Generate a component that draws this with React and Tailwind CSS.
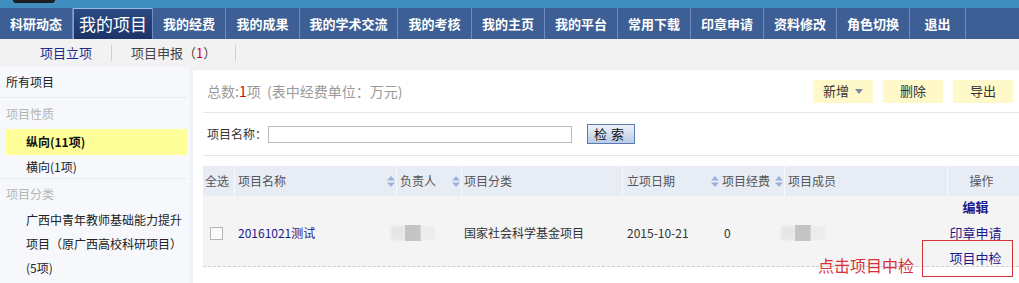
const navItems = [
  { label: "科研动态", w: "w-[73px]" },
  { label: "我的项目", w: "w-[80px]", active: true },
  { label: "我的经费", w: "w-[73px]" },
  { label: "我的成果", w: "w-[74px]" },
  { label: "我的学术交流", w: "w-[98px]" },
  { label: "我的考核", w: "w-[74px]" },
  { label: "我的主页", w: "w-[73px]" },
  { label: "我的平台", w: "w-[73px]" },
  { label: "常用下载", w: "w-[73px]" },
  { label: "印章申请", w: "w-[73px]" },
  { label: "资料修改", w: "w-[73px]" },
  { label: "角色切换", w: "w-[73px]" },
  { label: "退出", w: "w-[56px]" },
];

function SortIcon() {
  return (
    <svg width="8" height="11" viewBox="0 0 8 11" className="shrink-0">
      <path d="M4 0 L8 4.5 L0 4.5 Z" fill="#9bb3dc" />
      <path d="M0 6.5 L8 6.5 L4 11 Z" fill="#9bb3dc" />
    </svg>
  );
}

function Blur({ className }) {
  return (
    <div className={"flex h-[16px] items-center " + className}>
      <div className="h-[14px] w-[14px] bg-[#e6e6e6] blur-[1px]" />
      <div className="h-[16px] w-[16px] bg-[#c4c4c4] blur-[0.5px]" />
      <div className="h-[14px] w-[14px] bg-[#ececec] blur-[1px]" />
    </div>
  );
}

export default function App() {
  return (
    <div
      className="w-[1019px] h-[283px] overflow-hidden bg-white text-[12px] text-[#333]"
      style={{ fontFamily: '"Noto Sans CJK SC", "Noto Sans", sans-serif' }}
    >
      {/* header remnant */}
      <div className="h-[8px] bg-[#3f8ebf] relative">
        <div className="absolute left-[13px] top-0 h-[3px] w-[42px] rounded-b-[3px] bg-[#1e1e1e]" />
      </div>

      {/* main nav */}
      <div className="flex h-[31px] bg-[#3d5f95]">
        {navItems.map((it) => (
          <div
            key={it.label}
            className={
              "flex items-center justify-center border-r border-[#6c8cc2] font-bold text-white " +
              it.w +
              (it.active
                ? " text-[17px] font-normal bg-gradient-to-b from-[#2c4b85] to-[#1c3366] border-l border-t border-l-[#7d9fd3] border-t-[#9bb8e2]"
                : " text-[13px]")
            }
          >
            {it.label}
          </div>
        ))}
      </div>

      {/* sub nav */}
      <div className="flex h-[28px] items-center bg-[#f2f2f2] text-[13px]">
        <span className="ml-[40px] text-[#1d2a8f]">项目立项</span>
        <span className="ml-[19px] h-[16px] w-px bg-[#d0d0d0]" />
        <span className="ml-[19px] text-[#444]">
          项目申报（<span className="text-[#d0021b]">1</span>）
        </span>
        <span className="ml-[19px] h-[16px] w-px bg-[#d0d0d0]" />
      </div>

      <div className="flex h-[216px]">
        {/* sidebar */}
        <div className="w-[193px] shrink-0 border-r-[3px] border-[#eef2f8] bg-[#f6f8fb] pr-[3px]">
          <div className="flex h-[31px] items-center border-b border-[#e8ebf0] pl-[6px] text-[#222]">
            所有项目
          </div>
          <div className="flex h-[31px] items-center pl-[6px] text-[#b5b5b5]">项目性质</div>
          <div className="ml-[6px] flex h-[26px] items-center bg-[#ffff99] pl-[20px] font-bold text-[#111]">
            纵向(11项)
          </div>
          <div className="flex h-[24px] items-center border-b border-[#e8ebf0] pl-[26px] text-[#222]">
            横向(1项)
          </div>
          <div className="flex h-[29px] items-center pl-[6px] text-[#b5b5b5]">项目分类</div>
          <div className="pl-[26px] leading-[24px] text-[#222]">
            <div>广西中青年教师基础能力提升</div>
            <div>项目（原广西高校科研项目）</div>
            <div>(5项)</div>
          </div>
        </div>

        {/* content */}
        <div className="relative flex-1 border-t-[3px] border-[#f0f0f0] pl-[10px]">
          <div className="flex h-[43px] items-center justify-between border-b border-[#e6e6e6]">
            <div className="pl-[4px] text-[14px] text-[#9a9a9a]">
              总数:<span className="text-[#c0101c]">1</span>项 &nbsp;(表中经费单位：万元)
            </div>
            <div className="flex gap-[10px] pr-[6px] text-[13px] text-[#333]">
              <div className="flex h-[23px] w-[60px] items-center justify-center gap-[6px] bg-[#fff9c9]">
                新增
                <svg width="8" height="5" viewBox="0 0 8 5">
                  <path d="M0 0 L8 0 L4 5 Z" fill="#7a8aa6" />
                </svg>
              </div>
              <div className="flex h-[23px] w-[60px] items-center justify-center bg-[#fff9c9]">删除</div>
              <div className="flex h-[23px] w-[60px] items-center justify-center bg-[#fff9c9]">导出</div>
            </div>
          </div>

          <div className="flex h-[43px] items-center border-b border-[#e6e6e6] pl-[4px]">
            <span className="text-[#333]">项目名称：</span>
            <div className="ml-[1px] h-[17px] w-[304px] border border-[#b9b9b9] bg-white" />
            <div className="ml-[15px] flex h-[20px] w-[48px] items-center justify-center border border-[#5b7bb0] bg-gradient-to-b from-[#eef3fb] to-[#b9cbe8] text-[13px] tracking-[4px] text-[#111]">
              检索
            </div>
          </div>

          {/* table */}
          <div className="mt-[10px]">
            <div className="flex h-[30px] items-center bg-[#e8ecf5] text-[#555]">
              <div className="flex h-full w-[32px] items-center border-r border-[#f8f9fc] pl-[2px]">全选</div>
              <div className="flex h-full w-[162px] items-center justify-between border-r border-[#f8f9fc] pl-[3px] pr-[1px]">
                项目名称
                <SortIcon />
              </div>
              <div className="flex h-full w-[65px] items-center justify-between border-r border-[#f8f9fc] pl-[3px] pr-[1px]">
                负责人
                <SortIcon />
              </div>
              <div className="flex h-full w-[161px] items-center border-r border-[#f8f9fc] pl-[2px]">项目分类</div>
              <div className="flex h-full w-[97px] items-center justify-between pl-[4px] pr-[1px]">
                立项日期
                <SortIcon />
              </div>
              <div className="flex h-full w-[65px] items-center justify-between border-r border-[#f8f9fc] pl-[2px] pr-[1px]">
                项目经费
                <SortIcon />
              </div>
              <div className="flex h-full w-[163px] items-center border-r border-[#f8f9fc] pl-[3px]">项目成员</div>
              <div className="flex h-full flex-1 items-center justify-center pr-[4px]">操作</div>
            </div>

            <div className="flex h-[71px] items-center border-b border-dashed border-[#cfcfcf] bg-[#f4f4f4]">
              <div className="flex w-[32px] justify-start pl-[7px] pt-[4px]">
                <div className="h-[13px] w-[13px] border border-[#b5b5b5] bg-[#fafafa]" />
              </div>
              <div className="w-[162px] pl-[3px] pt-[4px] text-[#1a1a8c]">20161021测试</div>
              <div className="w-[65px] pt-[4px]">
                <Blur className="-ml-[6px]" />
              </div>
              <div className="w-[161px] pl-[2px] pt-[4px]">国家社会科学基金项目</div>
              <div className="w-[97px] pl-[4px] pt-[4px]">2015-10-21</div>
              <div className="w-[65px] pl-[4px] pt-[4px]">0</div>
              <div className="w-[163px] pt-[4px]">
                <Blur className="-ml-[4px]" />
              </div>
              <div className="flex flex-1 flex-col items-center gap-[6px] pr-[16px] pt-[3px] text-[13px] text-[#1a1a8c]">
                <span className="font-semibold">编辑</span>
                <span>印章申请</span>
                <span>项目中检</span>
              </div>
            </div>
          </div>

          {/* annotation */}
          <div className="absolute left-[625px] top-[183px] text-[16px] text-[#d6323a]">点击项目中检</div>
          <div className="absolute left-[729px] top-[170px] h-[37px] w-[91px] border border-[#d6323a]" />
        </div>
      </div>
    </div>
  );
}
